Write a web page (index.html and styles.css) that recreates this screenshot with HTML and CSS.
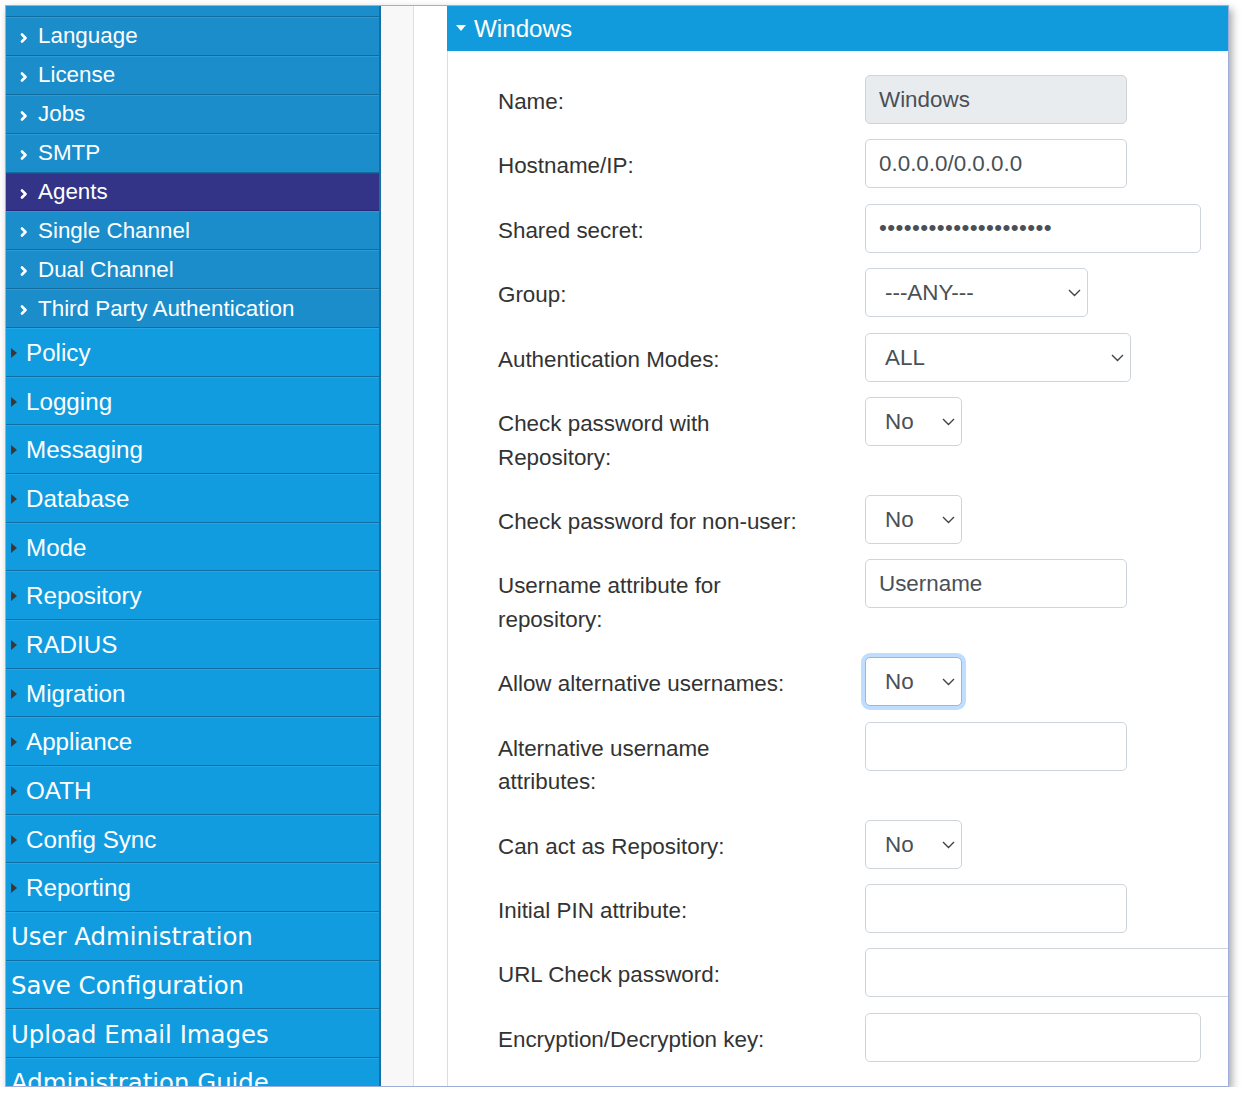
FILE: index.html
```html
<!DOCTYPE html>
<html>
<head>
<meta charset="utf-8">
<link rel="stylesheet" href="styles.css">
</head>
<body>
<div class="window">
  <nav class="sidebar">
    <div class="sub partial"></div>
    <div class="sub"><svg class="chev" width="8" height="10" viewBox="0 0 8 10"><path d="M2 1.5 L5.5 5 L2 8.5" /></svg>Language</div>
    <div class="sub"><svg class="chev" width="8" height="10" viewBox="0 0 8 10"><path d="M2 1.5 L5.5 5 L2 8.5" /></svg>License</div>
    <div class="sub"><svg class="chev" width="8" height="10" viewBox="0 0 8 10"><path d="M2 1.5 L5.5 5 L2 8.5" /></svg>Jobs</div>
    <div class="sub"><svg class="chev" width="8" height="10" viewBox="0 0 8 10"><path d="M2 1.5 L5.5 5 L2 8.5" /></svg>SMTP</div>
    <div class="sub active"><svg class="chev" width="8" height="10" viewBox="0 0 8 10"><path d="M2 1.5 L5.5 5 L2 8.5" /></svg>Agents</div>
    <div class="sub"><svg class="chev" width="8" height="10" viewBox="0 0 8 10"><path d="M2 1.5 L5.5 5 L2 8.5" /></svg>Single Channel</div>
    <div class="sub"><svg class="chev" width="8" height="10" viewBox="0 0 8 10"><path d="M2 1.5 L5.5 5 L2 8.5" /></svg>Dual Channel</div>
    <div class="sub"><svg class="chev" width="8" height="10" viewBox="0 0 8 10"><path d="M2 1.5 L5.5 5 L2 8.5" /></svg>Third Party Authentication</div>
    <div class="main"><span class="tri"></span>Policy</div>
    <div class="main"><span class="tri"></span>Logging</div>
    <div class="main"><span class="tri"></span>Messaging</div>
    <div class="main"><span class="tri"></span>Database</div>
    <div class="main"><span class="tri"></span>Mode</div>
    <div class="main"><span class="tri"></span>Repository</div>
    <div class="main"><span class="tri"></span>RADIUS</div>
    <div class="main"><span class="tri"></span>Migration</div>
    <div class="main"><span class="tri"></span>Appliance</div>
    <div class="main"><span class="tri"></span>OATH</div>
    <div class="main"><span class="tri"></span>Config Sync</div>
    <div class="main"><span class="tri"></span>Reporting</div>
    <div class="main admin">User Administration</div>
    <div class="main admin">Save Configuration</div>
    <div class="main admin">Upload Email Images</div>
    <div class="main admin">Administration Guide</div>
  </nav>
  <div class="gutter"></div>
  <div class="spacer"></div>
  <section class="panel">
    <div class="panel-head"><span class="down"></span>Windows</div>
    <div class="panel-body">
      <div class="row"><div class="label">Name:</div><input class="field w262 disabled" type="text" value="Windows" disabled></div>
      <div class="row"><div class="label">Hostname/IP:</div><input class="field w262" type="text" value="0.0.0.0/0.0.0.0"></div>
      <div class="row"><div class="label">Shared secret:</div><input class="field w336 pw" type="password" value="xxxxxxxxxxxxxxxxxxxxx"></div>
      <div class="row"><div class="label">Group:</div><div class="sel w223"><select class="field"><option>---ANY---</option></select><svg class="arrow" width="13" height="8" viewBox="0 0 13 8"><path d="M1 1 L6.5 6.5 L12 1"/></svg></div></div>
      <div class="row"><div class="label">Authentication Modes:</div><div class="sel w266"><select class="field"><option>ALL</option></select><svg class="arrow" width="13" height="8" viewBox="0 0 13 8"><path d="M1 1 L6.5 6.5 L12 1"/></svg></div></div>
      <div class="row"><div class="label">Check password with<br>Repository:</div><div class="sel w97"><select class="field"><option>No</option></select><svg class="arrow" width="13" height="8" viewBox="0 0 13 8"><path d="M1 1 L6.5 6.5 L12 1"/></svg></div></div>
      <div class="row"><div class="label">Check password for non-user:</div><div class="sel w97"><select class="field"><option>No</option></select><svg class="arrow" width="13" height="8" viewBox="0 0 13 8"><path d="M1 1 L6.5 6.5 L12 1"/></svg></div></div>
      <div class="row"><div class="label">Username attribute for<br>repository:</div><input class="field w262" type="text" value="Username"></div>
      <div class="row"><div class="label">Allow alternative usernames:</div><div class="sel w97"><select class="field focus"><option>No</option></select><svg class="arrow" width="13" height="8" viewBox="0 0 13 8"><path d="M1 1 L6.5 6.5 L12 1"/></svg></div></div>
      <div class="row"><div class="label">Alternative username<br>attributes:</div><input class="field w262" type="text" value=""></div>
      <div class="row"><div class="label">Can act as Repository:</div><div class="sel w97"><select class="field"><option>No</option></select><svg class="arrow" width="13" height="8" viewBox="0 0 13 8"><path d="M1 1 L6.5 6.5 L12 1"/></svg></div></div>
      <div class="row"><div class="label">Initial PIN attribute:</div><input class="field w262" type="text" value=""></div>
      <div class="row"><div class="label">URL Check password:</div><input class="field w420" type="text" value=""></div>
      <div class="row"><div class="label">Encryption/Decryption key:</div><input class="field w336" type="text" value=""></div>
    </div>
  </section>
</div>
</body>
</html>
```
FILE: styles.css
```css
html, body {
  margin: 0;
  padding: 0;
  background: #ffffff;
}

.window {
  margin: 5px 0 0 5px;
  width: 1224px;
  height: 1082px;
  box-sizing: border-box;
  border: 1px solid #9eaedb;
  display: flex;
  overflow: hidden;
  box-shadow: 3px 4px 8px rgba(0, 0, 0, 0.35);
  background: #fff;
}

/* Sidebar */
.sidebar {
  flex: 0 0 375px;
  box-sizing: border-box;
  border-right: 2px solid #176ea3;
  background: #129ce0;
  display: flex;
  flex-direction: column;
  font-family: "Liberation Sans", Arial, sans-serif;
  color: #fff;
  overflow: hidden;
}

.sub {
  flex: 0 0 38.9px;
  box-sizing: border-box;
  background: #1a8dca;
  border-top: 1px solid #2a9bd6;
  border-bottom: 1px solid #116ca0;
  display: flex;
  align-items: center;
  padding-left: 14px;
  font-size: 22.4px;
  white-space: nowrap;
}

.sub.partial {
  flex-basis: 11px;
  border-top: none;
}

.sub.active {
  background: #333488;
  border-top-color: #3b3c92;
  border-bottom-color: #27287a;
}

.chev {
  margin-right: 10px;
  margin-top: 3px;
}

.chev path {
  fill: none;
  stroke: #fff;
  stroke-width: 2.6;
  stroke-linecap: round;
  stroke-linejoin: round;
}

.main {
  flex: 0 0 48.67px;
  box-sizing: border-box;
  background: #129ce0;
  border-top: 1px solid #22a6e6;
  border-bottom: 1px solid #0f6fa3;
  display: flex;
  align-items: center;
  padding-left: 0;
  padding-top: 1px;
  font-size: 24.2px;
  white-space: nowrap;
}

.tri {
  width: 0;
  height: 0;
  border-top: 5px solid transparent;
  border-bottom: 5px solid transparent;
  border-left: 6px solid #383838;
  margin-left: 5px;
  margin-right: 9px;
}

.main.admin {
  font-family: "DejaVu Sans", Verdana, sans-serif;
  font-size: 24.4px;
  padding-left: 5px;
}

/* gutters */
.gutter {
  flex: 0 0 33px;
  box-sizing: border-box;
  background: #f8f8f8;
  border-right: 1px solid #dedede;
}

.spacer {
  flex: 0 0 33px;
  background: #ffffff;
}

/* Panel */
.panel {
  flex: 1 1 auto;
  min-width: 0;
  display: flex;
  flex-direction: column;
  font-family: "Liberation Sans", Arial, sans-serif;
}

.panel-head {
  flex: 0 0 45px;
  background: #129bdc;
  color: #fff;
  font-size: 24.2px;
  display: flex;
  align-items: center;
  padding-left: 9px;
}

.down {
  width: 0;
  height: 0;
  border-left: 5.5px solid transparent;
  border-right: 5.5px solid transparent;
  border-top: 6px solid #fff;
  margin-right: 8px;
  margin-top: -2px;
}

.panel-body {
  flex: 1 1 auto;
  border-left: 1px solid #dddddd;
  padding: 24px 0 0 50px;
  overflow: hidden;
}

.row {
  display: flex;
  align-items: flex-start;
}

.label {
  flex: 0 0 367px;
  padding: 10px 0 20.8px;
  line-height: 33.6px;
  font-size: 22.4px;
  color: #333333;
  white-space: nowrap;
}

.field {
  box-sizing: border-box;
  height: 49px;
  margin: 0;
  padding: 0 13px;
  border: 1px solid #ced4da;
  border-radius: 5px;
  background: #ffffff;
  font-family: "Liberation Sans", Arial, sans-serif;
  font-size: 22.4px;
  color: #495057;
  outline: none;
  flex: 0 0 auto;
}

.field.disabled {
  background: #e9ecef;
  color: #495057;
}

.field.pw {
  font-size: 22.4px;
  letter-spacing: 0.4px;
}

.w262 { width: 262px; }
.w336 { width: 336px; }
.w420 { width: 420px; }
.w223 { width: 223px; }
.w266 { width: 266px; }
.w97 { width: 97px; }

.sel {
  position: relative;
  flex: 0 0 auto;
  height: 49px;
}

.sel select {
  -webkit-appearance: none;
  appearance: none;
  width: 100%;
  padding-left: 19px;
}

.sel select.focus {
  border: 1.5px solid #80bdff;
  box-shadow: 0 0 0 4px rgba(0, 123, 255, 0.25);
}

.arrow {
  position: absolute;
  right: 7px;
  top: 21px;
  pointer-events: none;
}

.arrow path {
  fill: none;
  stroke: #3f4448;
  stroke-width: 1.4;
}
```
